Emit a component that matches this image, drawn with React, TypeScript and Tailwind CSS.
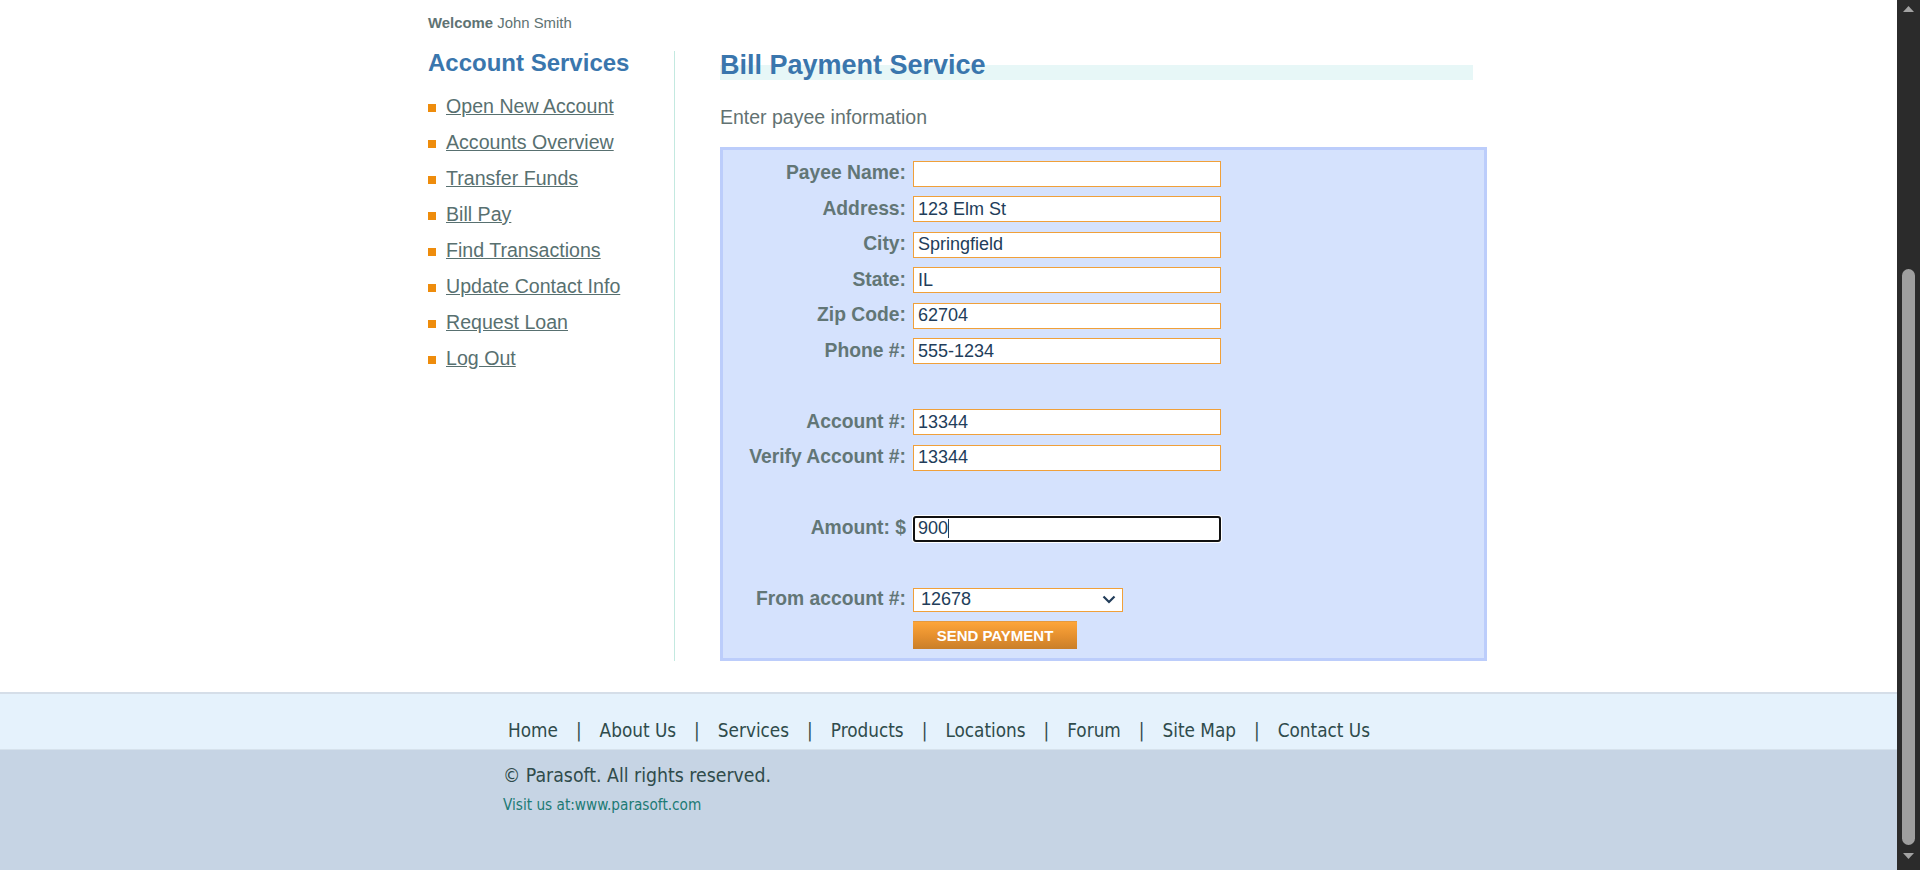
import React from 'react';

const services = [
  'Open New Account',
  'Accounts Overview',
  'Transfer Funds',
  'Bill Pay',
  'Find Transactions',
  'Update Contact Info',
  'Request Loan',
  'Log Out',
];

const footerLinks = ['Home', 'About Us', 'Services', 'Products', 'Locations', 'Forum', 'Site Map', 'Contact Us'];

type Field = { label: string; value: string } | null;

const topFields: Field[] = [
  { label: 'Payee Name:', value: '' },
  { label: 'Address:', value: '123 Elm St' },
  { label: 'City:', value: 'Springfield' },
  { label: 'State:', value: 'IL' },
  { label: 'Zip Code:', value: '62704' },
  { label: 'Phone #:', value: '555-1234' },
  null,
  { label: 'Account #:', value: '13344' },
  { label: 'Verify Account #:', value: '13344' },
  null,
];

function Label({ children }: { children?: React.ReactNode }) {
  return (
    <div className="h-[35.5px] flex items-center justify-end text-[19.3px] font-bold text-[#627676] whitespace-nowrap">
      {children}
    </div>
  );
}

function TextField({ value }: { value: string }) {
  return (
    <div className="h-[35.5px] flex items-center">
      <input
        readOnly
        value={value}
        className="w-[308px] h-[26px] bg-white border border-[#f0a03a] px-[4px] text-[18px] text-[#223d5a] outline-none"
        style={{ fontFamily: '"Liberation Sans", Arial, sans-serif' }}
      />
    </div>
  );
}

function Sidebar() {
  return (
    <div className="w-[246px] shrink-0">
      <h2 className="mt-[1px] text-[24px] leading-[28px] font-bold text-[#3a76ad]">Account Services</h2>
      <ul className="mt-[11px]">
        {services.map((s) => (
          <li key={s} className="h-[36px] flex items-center gap-[10px]">
            <span className="w-[8px] h-[8px] bg-[#ee8c0c] mt-[3px] shrink-0" />
            <a href="#" className="text-[19.6px] leading-[36px] text-[#587070] underline">
              {s}
            </a>
          </li>
        ))}
      </ul>
    </div>
  );
}

function BillPayForm() {
  return (
    <div className="w-[767px] border-[3px] border-[#bccdfb] bg-[#d5e2fd] pt-[6px] pb-[4.75px]">
      <div className="grid grid-cols-[183px_auto] gap-x-[7px]">
        {topFields.map((f, i) =>
          f ? (
            <React.Fragment key={i}>
              <Label>{f.label}</Label>
              <TextField value={f.value} />
            </React.Fragment>
          ) : (
            <React.Fragment key={i}>
              <Label />
              <div className="h-[35.5px]" />
            </React.Fragment>
          ),
        )}

        <Label>Amount: $</Label>
        <div className="h-[35.5px] flex items-center">
          <div className="w-[308px] h-[26px] bg-white border-2 border-[#111111] rounded-[3px] ring-1 ring-white flex items-center pl-[3px] text-[18px] text-[#223d5a]">
            <span>900</span>
            <span className="w-[1px] h-[19px] bg-[#223d5a]" />
          </div>
        </div>

        <Label />
        <div className="h-[35.5px]" />

        <Label>From account #:</Label>
        <div className="h-[35.5px] flex items-center">
          <div className="w-[210px] h-[24px] bg-white border border-[#f0a03a] flex items-center justify-between pl-[7px] pr-[6px] text-[18px] text-[#223d5a]">
            <span>12678</span>
            <svg width="14" height="9" viewBox="0 0 14 9" fill="none">
              <path d="M1.5 1.5 L7 7 L12.5 1.5" stroke="#223d5a" strokeWidth="2.2" />
            </svg>
          </div>
        </div>

        <div />
        <div className="h-[35.5px] flex items-center">
          <button className="w-[164px] h-[28px] bg-[linear-gradient(to_bottom,#fda53a,#e48f2e_55%,#c97f2a)] border-t border-[#e59a3e] text-white text-[15px] font-bold">
            SEND PAYMENT
          </button>
        </div>
      </div>
    </div>
  );
}

function Scrollbar() {
  return (
    <div className="w-[23px] h-[870px] shrink-0 bg-[#2b2b2b] flex flex-col items-center">
      <svg className="mt-[6px]" width="11" height="7" viewBox="0 0 11 7">
        <path d="M5.5 0 L11 6 L0 6 Z" fill="#a3a3a3" />
      </svg>
      <div className="mt-[256px] w-[13px] h-[576px] rounded-full bg-[#9f9f9f]" />
      <svg className="mt-[8px]" width="11" height="7" viewBox="0 0 11 7">
        <path d="M0 0 L11 0 L5.5 6 Z" fill="#a3a3a3" />
      </svg>
    </div>
  );
}

export default function App() {
  return (
    <div
      className="flex w-[1920px] h-[870px] overflow-hidden bg-white"
      style={{ fontFamily: '"Liberation Sans", Arial, sans-serif' }}
    >
      <div className="flex-1 flex flex-col">
        <div className="pl-[428px] pt-[13px] text-[14.9px] leading-[20px] text-[#5f7373]">
          <b>Welcome</b> John Smith
        </div>

        <div className="pl-[428px] mt-[15px] flex">
          <Sidebar />
          <div className="mt-[3px] w-px bg-[#c3e9e0]" />
          <div className="pl-[45px]">
            <h1 className="w-[753px] pt-[0.5px] text-[27px] leading-[32px] font-bold text-[#3a76ad] bg-[linear-gradient(to_bottom,transparent_17.5px,#e7f7f7_17.5px,#e7f7f7_32.5px,transparent_32.5px)]">
              Bill Payment Service
            </h1>
            <p className="mt-[24px] text-[19.5px] leading-[24px] text-[#627272]">Enter payee information</p>
            <div className="mt-[18.5px]">
              <BillPayForm />
            </div>
          </div>
        </div>

        <footer className="mt-[31px] flex-1 flex flex-col" style={{ fontFamily: '"DejaVu Sans Condensed", "DejaVu Sans", sans-serif' }}>
          <div className="h-[57px] border-t-2 border-[#d5dee8] bg-[#e5f2fc] pt-[25px] pl-[508px]">
            <ul className="flex items-center text-[18.8px] leading-[24px] text-[#2f4b4b]">
              {footerLinks.map((l, i) => (
                <li key={l} className="flex items-center">
                  {i > 0 && <span className="px-[18px]">|</span>}
                  <a href="#">{l}</a>
                </li>
              ))}
            </ul>
          </div>
          <div className="flex-1 bg-[#c6d4e4] border-t border-[#d6e2ec] pl-[503px] pt-[14px]">
            <p className="text-[19.3px] leading-[24px] text-[#2f4b4b]">© Parasoft. All rights reserved.</p>
            <p className="mt-[8px] text-[15.2px] leading-[18px] text-[#1c7a74]">Visit us at:www.parasoft.com</p>
          </div>
        </footer>
      </div>
      <Scrollbar />
    </div>
  );
}
